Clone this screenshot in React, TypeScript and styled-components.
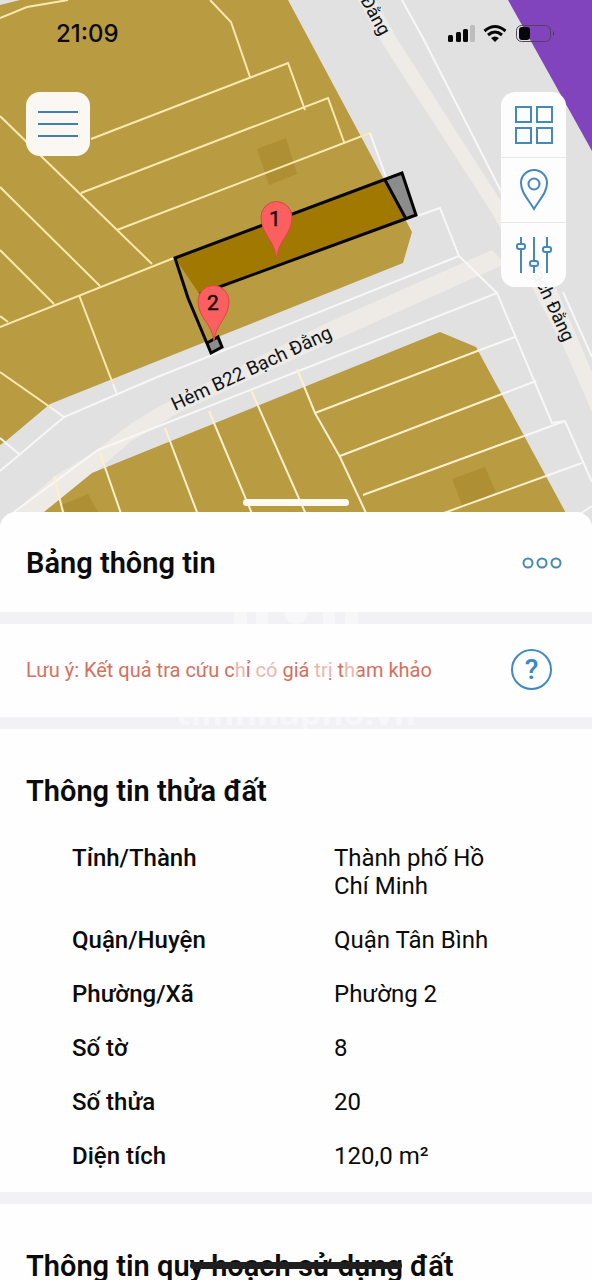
import React from "react";
import styled, { createGlobalStyle } from "styled-components";

const GlobalStyle = createGlobalStyle`
  * { box-sizing: border-box; }
  html, body { margin: 0; background: #fefefe; }
  body { font-family: Roboto, "Noto Sans", sans-serif; color: #0b0b0b; overflow-x: hidden; }
  button { font: inherit; padding: 0; border: 0; background: none; color: inherit; cursor: pointer; }
`;

const Screen = styled.main`
  position: relative;
  height: 100vh;
  overflow: hidden;
  background: #fefefe;
`;

const MapPane = styled.section`
  display: grid;
  grid-template: minmax(0, 1fr) / minmax(0, 1fr);
  height: 528px;
  > * { grid-area: 1 / 1; }
`;

const MapDrawing = styled.svg`
  display: block;
  width: 100%;
  height: 100%;
  text { font-family: Roboto, "Noto Sans", sans-serif; }
`;

const MapOverlay = styled.div`
  display: flex;
  flex-direction: column;
  padding: 20px 26px 20px;
  z-index: 1;
`;

const StatusBar = styled.div`
  display: flex;
  justify-content: space-between;
  align-items: center;
  height: 28px;
  padding: 0 12px 0 30px;
`;

const Clock = styled.time`
  font-family: Inter, sans-serif;
  font-weight: 500;
  font-size: 24px;
  line-height: 28px;
`;

const MapControls = styled.div`
  display: flex;
  justify-content: space-between;
  align-items: flex-start;
  margin-top: 44px;
`;

const MenuButton = styled.button`
  display: grid;
  place-items: center;
  width: 64px;
  height: 64px;
  border-radius: 14px;
  background: #fbf8f3;
`;

const ToolStack = styled.div`
  display: flex;
  flex-direction: column;
  width: 65px;
  border-radius: 14px;
  background: rgba(254, 254, 254, 0.95);
`;

const ToolButton = styled.button`
  display: grid;
  place-items: center;
  height: 65px;
  & + & { border-top: 1px solid #e6e8ec; }
`;

const Grabber = styled.div`
  width: 106px;
  height: 7px;
  margin: auto auto 2px;
  border-radius: 4px;
  background: #fffaf0;
`;

const Sheet = styled.div`
  position: relative;
  margin-top: -16px;
  z-index: 2;
  background: #f1f1f6;
  border-radius: 16px 16px 0 0;
`;

const Panel = styled.section<{ $top?: boolean }>`
  display: flex;
  align-items: center;
  justify-content: space-between;
  padding: ${(p) => (p.$top ? "2px 28px 0 26px" : "0 40px 2px 26px")};
  height: ${(p) => (p.$top ? "100px" : "93px")};
  margin-bottom: 12px;
  background: #fefefe;
  border-radius: ${(p) => (p.$top ? "16px 16px 0 0" : "0")};
`;

const Title = styled.h2`
  margin: 0;
  font-size: 29px;
  line-height: 32px;
  font-weight: 600;
`;

const Notice = styled.p`
  margin: 0;
  font-size: 20px;
  line-height: 24px;
  color: #d5705f;
`;

const IconButton = styled.button`
  display: grid;
  place-items: center;
`;

const HelpButton = styled.button`
  width: 41px;
  height: 41px;
  border: 2px solid #4189c2;
  border-radius: 50%;
  color: #3a86c8;
  font-size: 28px;
  font-weight: 500;
  line-height: 36px;
`;

const Section = styled.section`
  padding: 46px 26px 22px;
  margin-bottom: 12px;
  background: #fefefe;
`;

const Details = styled.dl`
  display: grid;
  grid-template-columns: 262px minmax(0, 180px);
  row-gap: 26px;
  margin: 37px 0 0 46px;
  font-size: 24px;
  line-height: 28px;
`;

const Term = styled.dt`
  font-weight: 500;
`;

const Value = styled.dd`
  margin: 0;
`;

const HomeIndicator = styled.div`
  position: absolute;
  z-index: 4;
  bottom: 11px;
  left: 50%;
  width: 212px;
  height: 7px;
  transform: translateX(-50%);
  border-radius: 4px;
  background: #1f1f1f;
`;

const Watermark = styled.div`
  position: absolute;
  z-index: 3;
  top: 88px;
  left: 0;
  right: 0;
  display: flex;
  flex-direction: column;
  align-items: center;
  color: rgba(254, 254, 254, 0.5);
  pointer-events: none;
`;

const WatermarkText = styled.span`
  font-family: "Open Sans", sans-serif;
  font-weight: 700;
  font-size: 34px;
  line-height: 40px;
`;

const creamLots = [
  "M0 18L27 7L68 0",
  "M210 0L231 22L250 77",
  "M0 116L152 264M0 187L100 286M0 250L54 304M0 316L8 322",
  "M0 327L174 258",
  "M91 139L288 63L305 110",
  "M81 193L328 98L344 142",
  "M117 230L370 133",
  "M79 295L113 384M0 372L50 407",
];

const whiteLots = [
  "M370 133L386 177M113 384L117 394M50 407L64 417M0 438L19 454",
  "M417 216L440 208L459 256",
  "M0 471L64 417L155 378L459 256L497 293",
  "M14 512L98 450L296 372L497 293L552 423L565 421L592 482",
  "M480 350L515 337M502 394L536 381M524 436L565 421M546 476L582 463M574 518L592 506",
  "M402 0L424 40L505 199M563 292L592 357",
];

const lowerLots = [
  "M54 476L67 528M99 450L126 528M165 428L203 528M209 411L258 528M251 390L312 528",
  "M297 369L315 413L340 457L373 528",
  "M315 413L480 350M340 456L502 394M363 495L524 436M430 518L546 476",
];

function CityMap() {
  return (
    <MapDrawing viewBox="0 0 592 528" preserveAspectRatio="xMidYMin slice" role="img" aria-label="Bản đồ thửa đất">
      <rect width="592" height="528" fill="#e1e1e1" />
      <path d="M508 0H592V151Z" fill="#8144bd" />
      <path d="M14 512L55 476L97 450L130 424L160 406L329 322L492 250L505 264L342 337L180 412L130 442L97 471L45 512Z" fill="#eeebe6" />
      <path d="M358 0H376L396 37L502 203L556 288L592 372V412L565 350L530 283L492 213L382 43Z" fill="#efece7" />
      <path d="M0 0H288L412 232L403 263L180 352L50 404L6 441L0 445Z" fill="#b99b42" />
      <path d="M0 0H20L0 5Z" fill="#e1e1e1" />
      <path d="M40 528L44 512L92 473L440 332L476 347L574 528Z" fill="#b99b42" />
      <g fill="#ae8f34">
        <path d="M257 149L286 138L297 174L269 185Z" />
        <path d="M452 479L485 467L496 492L463 508Z" />
        <path d="M62 505L88 494L98 512H65Z" />
      </g>
      <path d={creamLots.join("")} fill="none" stroke="#ffe8ae" strokeWidth="2" />
      <path d={whiteLots.join("")} fill="none" stroke="#f8f7f6" strokeWidth="2" />
      <path d={lowerLots.join("")} fill="none" stroke="#fff0cc" strokeWidth="2" />
      <path d="M175 258L402 173L416 216L200 295Z" fill="#a27900" />
      <path d="M385 180L402 173L416 216L406 219Z" fill="#8c8c8c" />
      <path d="M207 343L218 338L222 347L211 353Z" fill="#8c8c8c" />
      <path d="M406 219L385 180M207 343L218 337L222 347L211 353L188 298L175 258L402 173L416 215L200 294" fill="none" stroke="#050505" strokeWidth="3" />
      <g stroke="#d84848" strokeWidth="1" fill="#fb5f60">
        <path d="M276 257C275 241 261 234 261 217A15.500 15.500 0 0 1 292 217C292 234 278 241 277 257Z" />
        <path d="M214 341C213 325 198 318 198 301A15.500 15.500 0 0 1 229 301C229 318 215 325 214 341Z" />
      </g>
      <g fill="#190b0b" stroke="#190b0b" strokeWidth="0.500" fontSize="21" textAnchor="middle">
        <text x="275" y="226">1</text>
        <text x="213" y="310">2</text>
      </g>
      <g fill="#111" fontSize="18" stroke="#e9e9e9" strokeWidth="2" paintOrder="stroke">
        <text transform="translate(175 411) rotate(-25)" fontSize="19">Hẻm B22 Bạch Đằng</text>
        <text transform="translate(360 0) rotate(61)">Đằng</text>
        <text transform="translate(527 264) rotate(65)">Bạch Đằng</text>
      </g>
    </MapDrawing>
  );
}

const rows = [
  ["Tỉnh/Thành", "Thành phố Hồ Chí Minh"],
  ["Quận/Huyện", "Quận Tân Bình"],
  ["Phường/Xã", "Phường 2"],
  ["Số tờ", "8"],
  ["Số thửa", "20"],
  ["Diện tích", "120,0 m²"],
];

export default function App() {
  return (
    <>
      <GlobalStyle />
      <Screen>
        <MapPane>
          <CityMap />
          <MapOverlay>
            <StatusBar>
              <Clock>21:09</Clock>
              <svg width="108" height="28" viewBox="0 0 108 28" aria-label="Tín hiệu, Wi-Fi, pin">
                <g fill="#080808">
                  <rect x="2" y="15" width="5" height="7" rx="1.500" />
                  <rect x="10" y="12" width="5" height="10" rx="1.500" />
                  <rect x="17" y="9" width="5" height="13" rx="1.500" />
                  <rect x="24" y="5" width="5" height="17" rx="1.500" fill="#bdbdbd" />
                  <path d="M49 22L45 18Q49 15 53 18Z" />
                  <rect x="73" y="7" width="11" height="13" rx="3" />
                  <path d="M107 11V16Q109 13.500 107 11Z" fill="#4b2a6c" />
                </g>
                <path d="M38.500 11Q49 2 59.500 11M42 15Q49 9 56 15" fill="none" stroke="#080808" strokeWidth="3" />
                <rect x="70.500" y="5.500" width="34" height="16" rx="5" fill="none" stroke="#55425f" />
              </svg>
            </StatusBar>
            <MapControls>
              <MenuButton aria-label="Menu">
                <svg width="40" height="28" viewBox="0 0 40 28">
                  <path d="M0 2H40M0 14H40M0 26H40" stroke="#417fae" strokeWidth="2" />
                </svg>
              </MenuButton>
              <ToolStack>
                <ToolButton aria-label="Lớp bản đồ">
                  <svg width="40" height="40" viewBox="0 0 40 40" fill="none" stroke="#4688b8" strokeWidth="2">
                    <path d="M2 2H17V17H2ZM23 2H38V17H23ZM2 23H17V38H2ZM23 23H38V38H23Z" />
                  </svg>
                </ToolButton>
                <ToolButton aria-label="Vị trí">
                  <svg width="30" height="42" viewBox="0 0 30 42" fill="none" stroke="#4688b8" strokeWidth="2">
                    <path d="M15 40C10 31 2 24 2 14A13 13 0 0 1 28 14C28 24 20 31 15 40Z" />
                    <circle cx="15" cy="15" r="5.500" />
                  </svg>
                </ToolButton>
                <ToolButton aria-label="Bộ lọc">
                  <svg width="38" height="38" viewBox="0 0 38 38" fill="none" stroke="#4688b8" strokeWidth="2">
                    <path d="M6 1V8M6 14V37M19 1V24M19 30V37M32 1V10M32 16V37" />
                    <rect x="2" y="8" width="8" height="5" rx="2" />
                    <rect x="15" y="25" width="8" height="5" rx="2" />
                    <rect x="28" y="11" width="8" height="5" rx="2" />
                  </svg>
                </ToolButton>
              </ToolStack>
            </MapControls>
            <Grabber />
          </MapOverlay>
        </MapPane>
        <Sheet>
          <Panel $top>
            <Title>Bảng thông tin</Title>
            <IconButton aria-label="Thêm">
              <svg width="44" height="14" viewBox="0 0 44 14" fill="none" stroke="#4688b8" strokeWidth="2">
                <circle cx="8" cy="7" r="4.500" />
                <circle cx="22" cy="7" r="4.500" />
                <circle cx="36" cy="7" r="4.500" />
              </svg>
            </IconButton>
          </Panel>
          <Panel>
            <Notice>Lưu ý: Kết quả tra cứu chỉ có giá trị tham khảo</Notice>
            <HelpButton aria-label="Trợ giúp">?</HelpButton>
          </Panel>
          <Section>
            <Title>Thông tin thửa đất</Title>
            <Details>
              {rows.map(([term, value]) => (
                <React.Fragment key={term}>
                  <Term>{term}</Term>
                  <Value>{value}</Value>
                </React.Fragment>
              ))}
            </Details>
          </Section>
          <Section>
            <Title>Thông tin quy hoạch sử dụng đất</Title>
          </Section>
          <Watermark aria-hidden="true">
            <svg width="124" height="92" viewBox="0 0 124 92" fill="currentColor">
              <path d="M0 0H13V92H0ZM22 0H34V34H22ZM89 0H101V34H89ZM111 0H124V92H111Z" />
              <circle cx="62" cy="12" r="12" />
              <path d="M22 62H48V78H22ZM76 62H101V78H76Z" />
            </svg>
            <WatermarkText>timnhapho.vn</WatermarkText>
          </Watermark>
        </Sheet>
        <HomeIndicator />
      </Screen>
    </>
  );
}
